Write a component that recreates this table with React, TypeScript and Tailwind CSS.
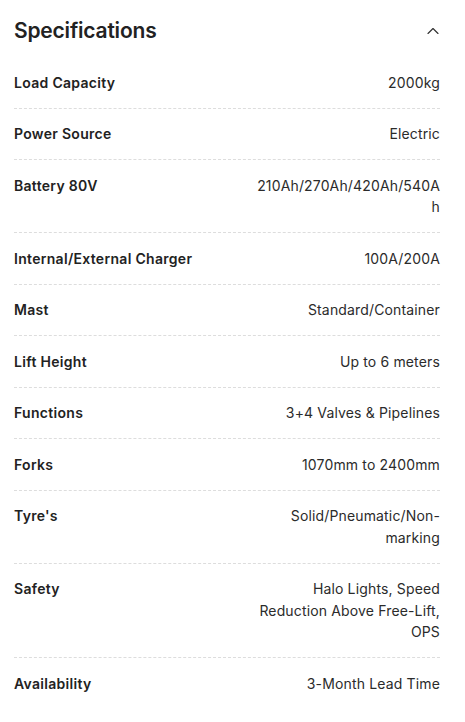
import { ChevronUp } from 'lucide-react';

const specs: { label: string; value: string[] }[] = [
  { label: 'Load Capacity', value: ['2000kg'] },
  { label: 'Power Source', value: ['Electric'] },
  { label: 'Battery 80V', value: ['210Ah/270Ah/420Ah/540A', 'h'] },
  { label: 'Internal/External Charger', value: ['100A/200A'] },
  { label: 'Mast', value: ['Standard/Container'] },
  { label: 'Lift Height', value: ['Up to 6 meters'] },
  { label: 'Functions', value: ['3+4 Valves & Pipelines'] },
  { label: 'Forks', value: ['1070mm to 2400mm'] },
  { label: "Tyre's", value: ['Solid/Pneumatic/Non-', 'marking'] },
  { label: 'Safety', value: ['Halo Lights, Speed', 'Reduction Above Free-Lift,', 'OPS'] },
  { label: 'Availability', value: ['3-Month Lead Time'] },
];

export default function App() {
  return (
    <div className="bg-white min-h-[722px] pl-[14px] pr-[25px] text-[#222222] font-['Inter',sans-serif]">
      <div className="flex items-center justify-between h-[57px] pt-[4px]">
        <h2 className="text-[21px] font-semibold tracking-[-0.2px]">Specifications</h2>
        <ChevronUp className="w-[20px] h-[20px] -mr-[3px] text-[#333]" strokeWidth={1.4} />
      </div>
      <div>
        {specs.map((s, i) => (
          <div
            key={s.label}
            className={
              'flex justify-between items-start py-[14.5px] text-[14px] leading-[21.5px] ' +
              (i < specs.length - 1 ? 'border-b border-dashed border-[#dddddd]' : '')
            }
          >
            <span className="font-semibold tracking-[0.3px]">{s.label}</span>
            <div className="text-right text-[#2b2b2b] tracking-[0.15px]">
              {s.value.map(line => (
                <div key={line} className="whitespace-nowrap">
                  {line}
                </div>
              ))}
            </div>
          </div>
        ))}
      </div>
    </div>
  );
}
